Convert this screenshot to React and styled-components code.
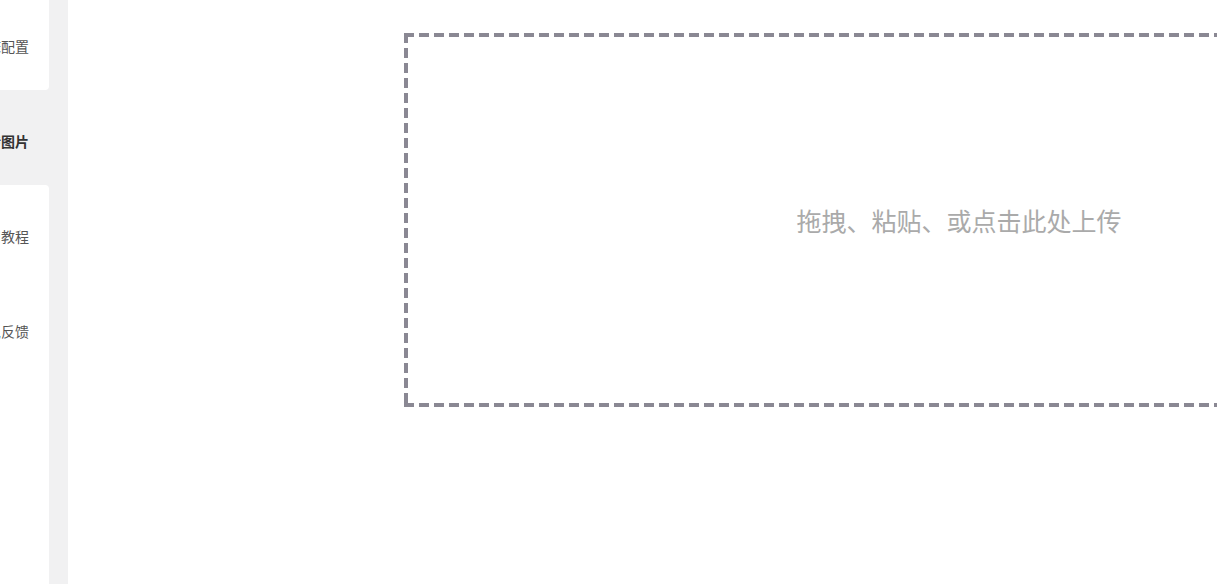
import React from "react";
import styled, { createGlobalStyle } from "styled-components";

const GlobalStyle = createGlobalStyle`
  html, body {
    margin: 0;
    padding: 0;
    height: 100%;
    overflow: hidden;
    background: #fff;
    font-family: "Noto Sans CJK SC", "Noto Sans", sans-serif;
  }
  #root {
    height: 100%;
  }
`;

const navItems = [
  { key: "config", label: "图床配置", round: "0 0 4px 0" },
  { key: "upload", label: "上传图片", active: true },
  { key: "guide", label: "使用教程", round: "0 4px 0 0" },
  { key: "feedback", label: "意见反馈" },
];

const DASH = "#8a8893";

const App = () => {
  return (
    <>
      <GlobalStyle />
      <Layout>
        <Sidebar>
          <NavList>
            {navItems.map((item) => (
              <NavItem key={item.key} $active={item.active} $round={item.round}>
                <NavLabel $active={item.active}>{item.label}</NavLabel>
              </NavItem>
            ))}
            <NavFill />
          </NavList>
        </Sidebar>
        <Gutter />
        <Main>
          <DropZone>
            <DropHint>拖拽、粘贴、或点击此处上传</DropHint>
          </DropZone>
        </Main>
      </Layout>
    </>
  );
};

const Layout = styled.div`
  display: flex;
  height: 100%;
  width: 1600px;
`;

const Sidebar = styled.aside`
  width: 49px;
  flex-shrink: 0;
  background: #f1f1f2;
  overflow: hidden;
`;

const NavList = styled.ul`
  list-style: none;
  margin: -5px 0 0;
  padding: 0;
  display: flex;
  flex-direction: column;
  height: calc(100% + 5px);
`;

const NavItem = styled.li`
  height: 95px;
  flex-shrink: 0;
  display: flex;
  align-items: center;
  justify-content: flex-end;
  padding: 7px 20px 0 0;
  box-sizing: border-box;
  background: ${(p) => (p.$active ? "#f1f1f2" : "#fff")};
  border-radius: ${(p) => p.$round || "0"};
  overflow: hidden;
`;

const NavFill = styled.li`
  flex: 1;
  background: #fff;
`;

const NavLabel = styled.span`
  font-size: 14px;
  line-height: 20px;
  white-space: nowrap;
  flex-shrink: 0;
  color: ${(p) => (p.$active ? "#333" : "#555")};
  font-weight: ${(p) => (p.$active ? 700 : 400)};
`;

const Gutter = styled.div`
  width: 19px;
  flex-shrink: 0;
  background: #f1f1f2;
`;

const Main = styled.main`
  flex: 1;
  padding: 33px 0 0 336px;
  background: #fff;
`;

const DropZone = styled.div`
  width: 1110px;
  height: 374px;
  box-sizing: border-box;
  background:
    linear-gradient(to right, ${DASH} 10px, transparent 10px) left top / 15px 4px repeat-x,
    linear-gradient(to right, ${DASH} 10px, transparent 10px) left bottom / 15px 4px repeat-x,
    linear-gradient(to bottom, ${DASH} 10px, transparent 10px) left top / 4px 15px repeat-y,
    linear-gradient(to bottom, ${DASH} 10px, transparent 10px) right top / 4px 15px repeat-y;
  display: flex;
  align-items: center;
  justify-content: center;
  cursor: pointer;
`;

const DropHint = styled.span`
  font-size: 25px;
  color: #aaaaaa;
  white-space: nowrap;
`;

export default App;
